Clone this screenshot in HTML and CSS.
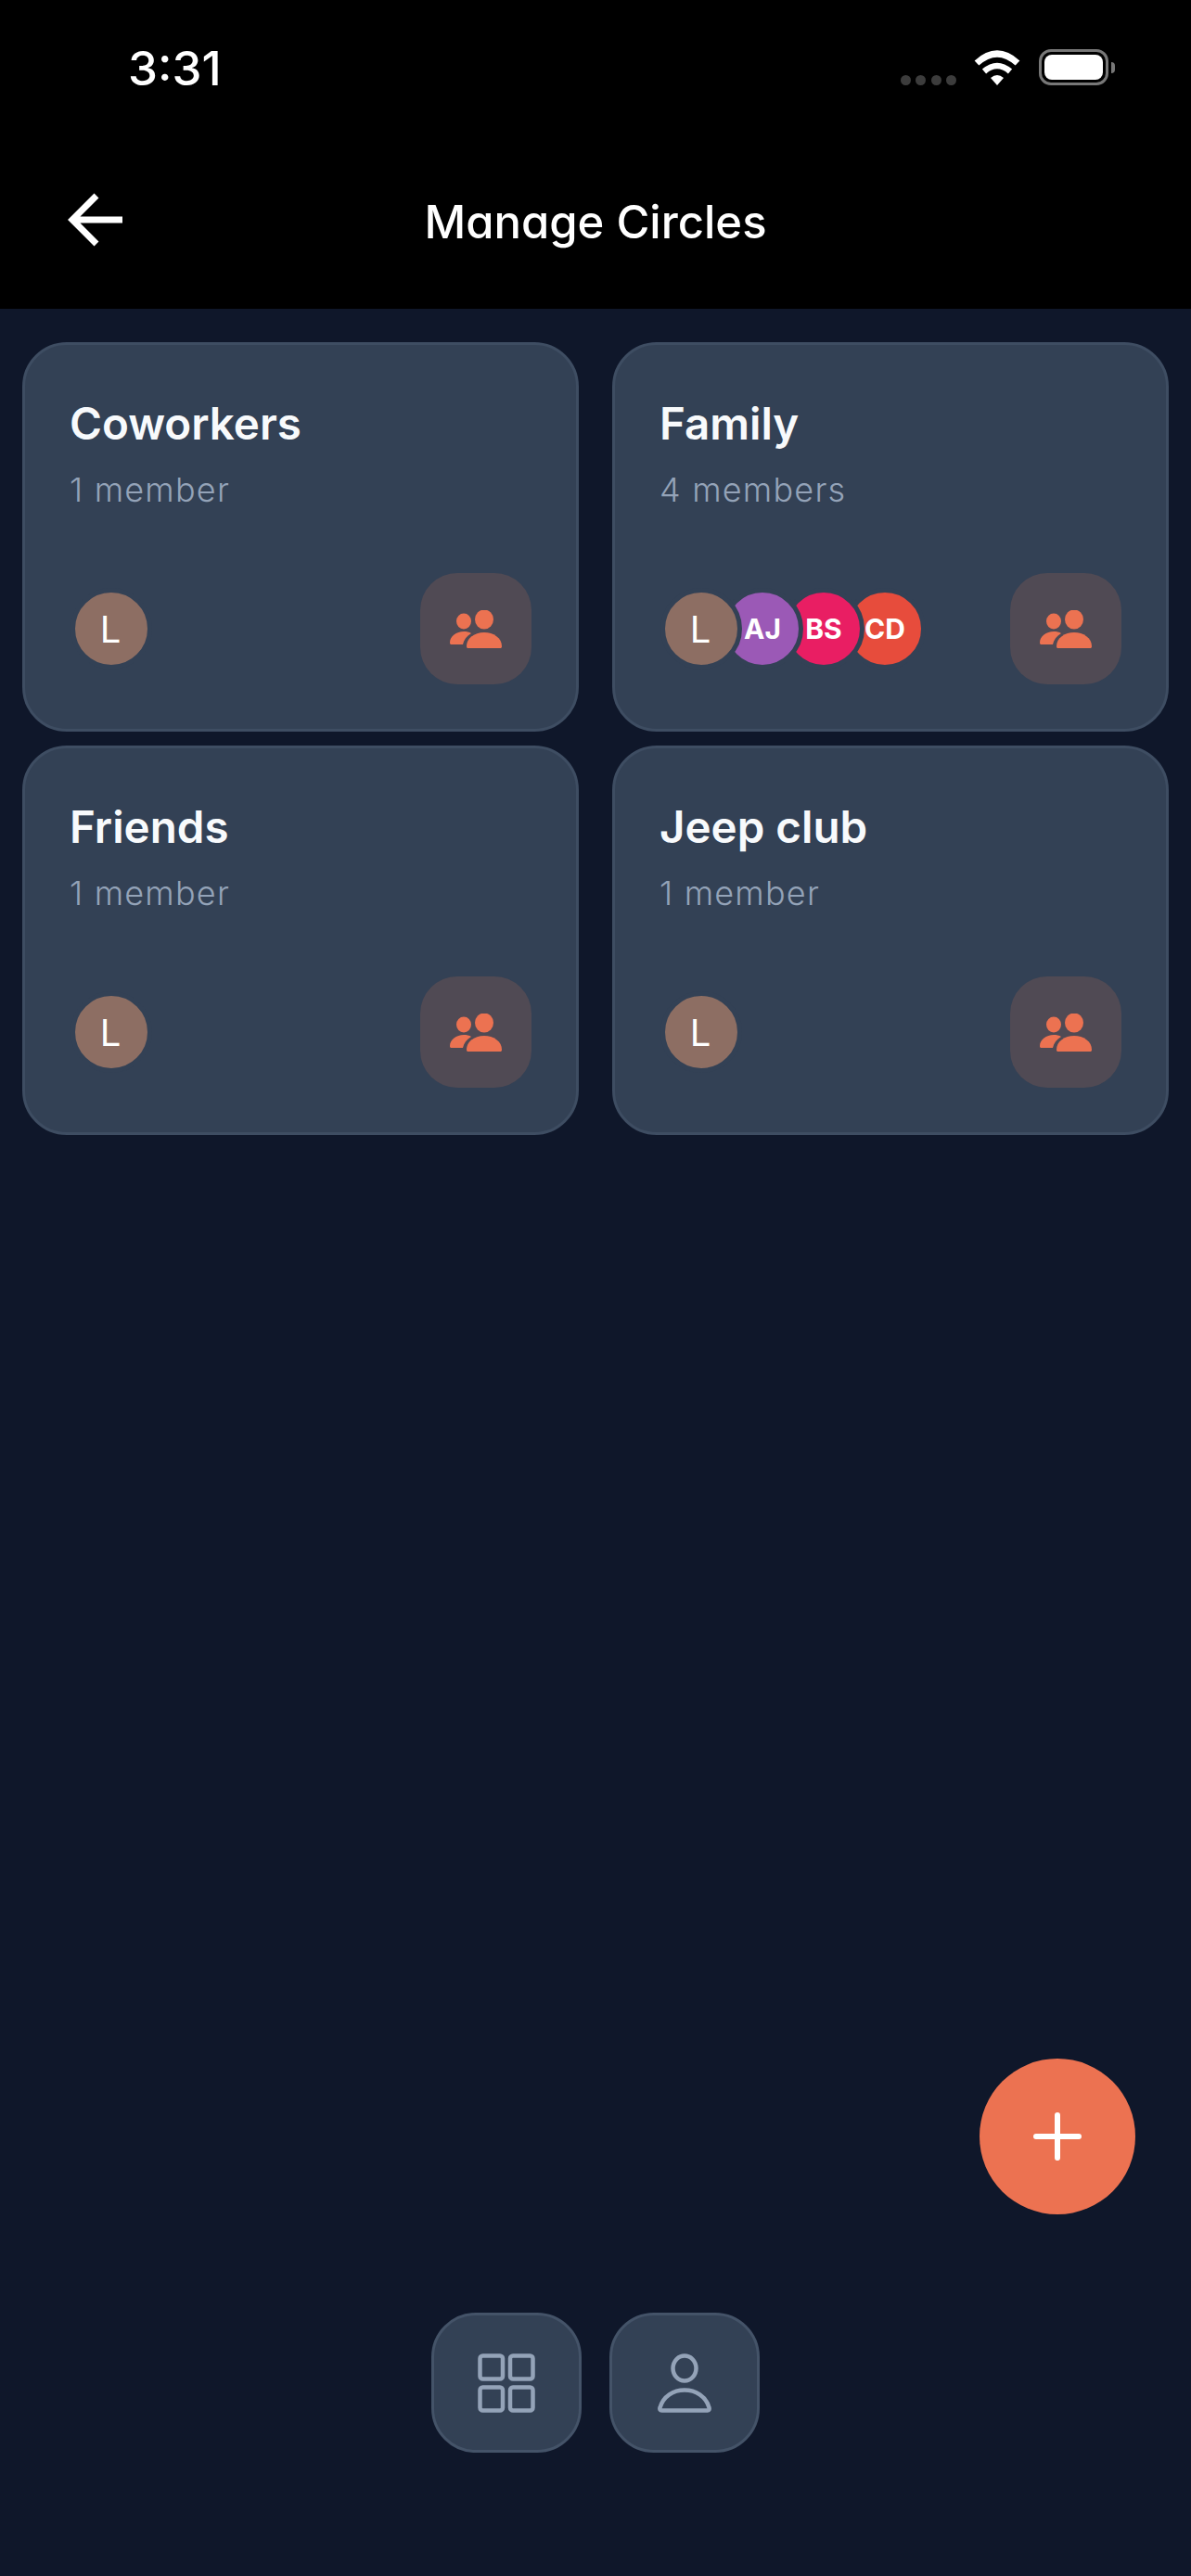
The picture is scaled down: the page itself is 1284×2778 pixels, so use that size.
FILE: index.html
```html
<!DOCTYPE html>
<html>
<head>
    <title>Manage Circles</title>
    <meta charset="UTF-8">
    <meta name="viewport" content="width=device-width, initial-scale=1.0">
    <link rel="stylesheet" href="styles.css">
</head>

<body>
    <header class="top">
        <div class="status">
            <span class="time">3:31</span>
            <div class="status-icons">
                <div class="signal"><i></i><i></i><i></i><i></i></div>
                <svg class="wifi" width="50" height="38" viewBox="0 0 50 38">
                    <path d="M3 14 Q25 -6 47 14" fill="none" stroke="#fff" stroke-width="7"/>
                    <path d="M11 23 Q25 11 39 23" fill="none" stroke="#fff" stroke-width="6.5"/>
                    <path d="M25 38 L18 30 Q25 24 32 30 Z" fill="#fff"/>
                </svg>
                <div class="battery"><div class="battery-fill"></div></div>
                <div class="battery-tip"></div>
            </div>
        </div>
        <div class="title-bar">
            <svg class="back" width="60" height="60" viewBox="0 0 60 60">
                <path d="M59 30 H5 M31 4 L5 30 L31 56" fill="none" stroke="#fff" stroke-width="7"/>
            </svg>
            <h1>Manage Circles</h1>
        </div>
    </header>

    <main class="circles">
        <section class="card">
            <h2>Coworkers</h2>
            <p>1 member</p>
            <div class="card-foot">
                <div class="avatars">
                    <span class="avatar me">L</span>
                </div>
                <div class="people-btn">
                    <svg width="56" height="41" viewBox="0 0 56 41"><use href="#people"/></svg>
                </div>
            </div>
        </section>

        <section class="card">
            <h2>Family</h2>
            <p>4 members</p>
            <div class="card-foot">
                <div class="avatars">
                    <span class="avatar me">L</span>
                    <span class="avatar aj">AJ</span>
                    <span class="avatar bs">BS</span>
                    <span class="avatar cd">CD</span>
                </div>
                <div class="people-btn">
                    <svg width="56" height="41" viewBox="0 0 56 41"><use href="#people"/></svg>
                </div>
            </div>
        </section>

        <section class="card">
            <h2>Friends</h2>
            <p>1 member</p>
            <div class="card-foot">
                <div class="avatars">
                    <span class="avatar me">L</span>
                </div>
                <div class="people-btn">
                    <svg width="56" height="41" viewBox="0 0 56 41"><use href="#people"/></svg>
                </div>
            </div>
        </section>

        <section class="card">
            <h2>Jeep club</h2>
            <p>1 member</p>
            <div class="card-foot">
                <div class="avatars">
                    <span class="avatar me">L</span>
                </div>
                <div class="people-btn">
                    <svg width="56" height="41" viewBox="0 0 56 41"><use href="#people"/></svg>
                </div>
            </div>
        </section>
    </main>

    <button class="fab">
        <svg width="52" height="52" viewBox="0 0 52 52">
            <path d="M3 26 H49 M26 3 V49" stroke="#fff" stroke-width="6" stroke-linecap="round"/>
        </svg>
    </button>

    <nav class="bottom-nav">
        <div class="nav-btn">
            <svg width="62" height="64" viewBox="0 0 62 64" fill="none" stroke="#94a3b8" stroke-width="4.5">
                <rect x="2.5" y="2.5" width="24.5" height="25" rx="3"/>
                <rect x="35" y="2.5" width="24.5" height="25" rx="3"/>
                <rect x="2.5" y="36.5" width="24.5" height="25" rx="3"/>
                <rect x="35" y="36.5" width="24.5" height="25" rx="3"/>
            </svg>
        </div>
        <div class="nav-btn">
            <svg width="58" height="64" viewBox="0 0 58 64" fill="none" stroke="#94a3b8" stroke-width="4.5">
                <ellipse cx="29" cy="16" rx="12.5" ry="13.5"/>
                <path d="M4.5 61.5 H53.5 C55.5 61.5 56 60 55.5 58.5 C52 46 41 39.5 29 39.5 C17 39.5 6 46 2.5 58.5 C2 60 2.5 61.5 4.5 61.5 Z"/>
            </svg>
        </div>
    </nav>

    <svg class="defs" width="0" height="0">
        <defs>
            <g id="people" fill="#ec7251">
                <ellipse cx="37" cy="10" rx="10" ry="10.5"/>
                <ellipse cx="15" cy="12" rx="8" ry="8.5"/>
                <path d="M18 39 C18 30 27 24 37 24 C47 24 56 30 56 39 C56 40.5 55.5 41 54 41 H20 C18.5 41 18 40.5 18 39 Z"/>
                <path d="M0 35 C0 28 7 23 15 23 C18 23 21 23.5 23 25 C18 28 15 32 14 37 H2 C0.5 37 0 36.5 0 35 Z"/>
            </g>
        </defs>
    </svg>
</body>
</html>
```

FILE: styles.css
```css
/* General */
* {
    box-sizing: border-box;
}

body {
    font-family: Inter, "Liberation Sans", sans-serif;
    margin: 0;
    height: 100vh;
    background-color: #0f172a;
    color: #fff;
    display: flex;
    flex-direction: column;
    position: relative;
}

.defs {
    position: absolute;
}

/* Top area */
.top {
    background-color: #000;
    height: 333px;
    flex-shrink: 0;
}

.status {
    display: flex;
    justify-content: space-between;
    align-items: flex-start;
    padding: 44px 82px 0 138px;
    height: 150px;
}

.time {
    font-size: 51px;
    font-weight: 500;
    line-height: 60px;
}

.status-icons {
    display: flex;
    align-items: flex-end;
    margin-top: 9px;
}

.signal {
    display: flex;
    gap: 5.5px;
    margin-right: 19px;
}

.signal i {
    width: 11px;
    height: 11px;
    border-radius: 50%;
    background-color: #3c3c3c;
}

.wifi {
    margin-right: 20px;
}

.battery {
    width: 75px;
    height: 39px;
    border: 3.5px solid #777;
    border-radius: 13px;
    padding: 3px;
}

.battery-fill {
    height: 100%;
    background-color: #fff;
    border-radius: 8px;
}

.battery-tip {
    width: 4px;
    height: 12px;
    margin: 0 0 13px 3px;
    background-color: #777;
    border-radius: 0 4px 4px 0;
}

.title-bar {
    display: flex;
    justify-content: center;
    align-items: center;
    height: 178px;
    position: relative;
}

.back {
    position: absolute;
    left: 73px;
    top: 57px;
}

h1 {
    margin: 0;
    font-size: 49px;
    font-weight: 500;
    font-feature-settings: "cv11";
}

/* Cards */
.circles {
    flex: 1;
    display: grid;
    grid-template-columns: 1fr 1fr;
    grid-auto-rows: 420px;
    column-gap: 36px;
    row-gap: 15px;
    padding: 36px 24px 0;
}

.card {
    background-color: #334155;
    border: 3px solid #3e4d62;
    border-radius: 48px;
    padding: 48px;
    display: flex;
    flex-direction: column;
}

.card h2 {
    margin: 4px 0 0;
    font-size: 47.5px;
    font-weight: 600;
    line-height: 66px;
    color: #f8fafc;
}

.card p {
    margin: 14px 0 0;
    font-size: 36px;
    font-weight: 300;
    line-height: 48px;
    letter-spacing: 1.2px;
    color: #94a3b8;
}

.card-foot {
    margin-top: auto;
    display: flex;
    justify-content: space-between;
    align-items: center;
}

.avatars {
    display: flex;
    margin-left: 1px;
}

.avatar {
    width: 88px;
    height: 88px;
    border-radius: 50%;
    border: 5px solid #334155;
    display: flex;
    justify-content: center;
    align-items: center;
    font-size: 30px;
    font-weight: 700;
    position: relative;
}

.avatar + .avatar {
    margin-left: -22px;
}

.me {
    background-color: #8d6e63;
    font-size: 40px;
    font-weight: 400;
    padding-right: 2px;
    z-index: 4;
}

.aj {
    background-color: #9b59b6;
    z-index: 3;
}

.bs {
    background-color: #e91e63;
    z-index: 2;
}

.cd {
    background-color: #e74c3c;
    z-index: 1;
}

.people-btn {
    width: 120px;
    height: 120px;
    border-radius: 40px;
    background-color: #504a54;
    display: flex;
    justify-content: center;
    align-items: center;
}

/* Floating button */
.fab {
    position: absolute;
    left: 1056px;
    top: 2220px;
    width: 168px;
    height: 168px;
    border: none;
    border-radius: 50%;
    padding: 0;
    background-color: #ec7251;
    display: flex;
    justify-content: center;
    align-items: center;
}

/* Bottom nav */
.bottom-nav {
    display: flex;
    justify-content: center;
    gap: 30px;
    padding-bottom: 133px;
}

.nav-btn {
    width: 162px;
    height: 151px;
    background-color: #334155;
    border: 3px solid #445368;
    border-radius: 48px;
    display: flex;
    justify-content: center;
    align-items: center;
}
```
